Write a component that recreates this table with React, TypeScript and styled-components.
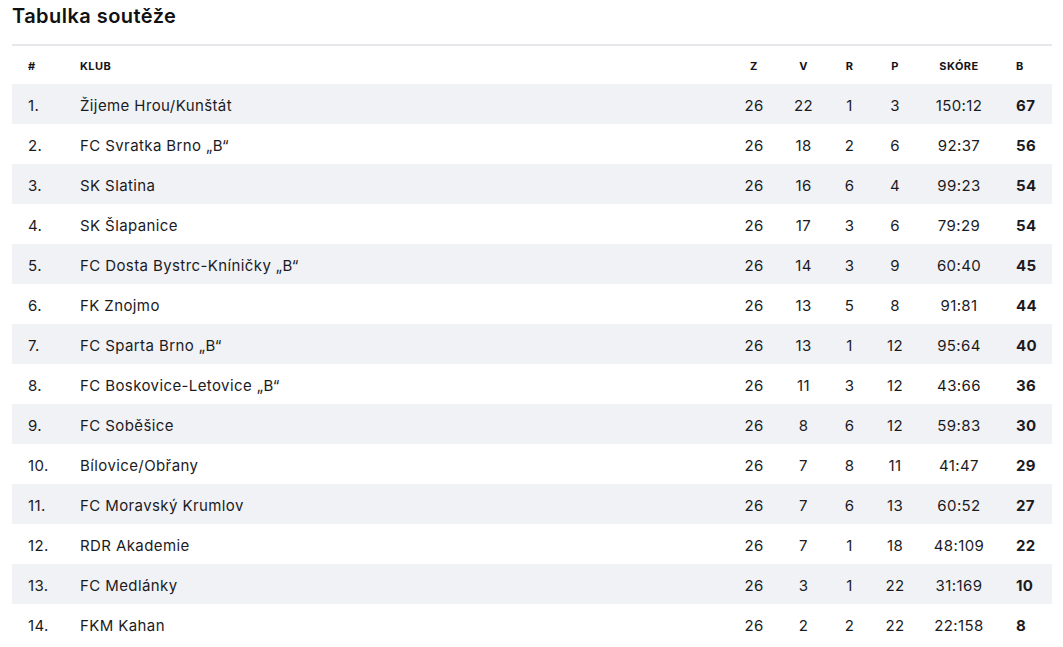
import React from "react"
import styled, { createGlobalStyle } from "styled-components"

const GlobalStyle = createGlobalStyle`
  html, body {
    margin: 0;
    padding: 0;
    background: #fff;
  }
  body {
    font-family: Inter, Roboto, "Liberation Sans", sans-serif;
    color: #1b1b1f;
  }
`

const Page = styled.main`
  padding: 0 11px 0 12px;
`

const Title = styled.h2`
  margin: 0;
  padding-top: 4px;
  height: 40px;
  font-family: Inter, Roboto, sans-serif;
  font-size: 20px;
  font-weight: 600;
  line-height: 25px;
  letter-spacing: 0.45px;
  color: #111114;
`

const Table = styled.table`
  width: 100%;
  border-collapse: collapse;
  table-layout: fixed;
  border-top: 2px solid #e6e7eb;
`

const HeadCell = styled.th<{ $align?: "left" | "center"; $pad?: number }>`
  height: 37px;
  padding: 1px 0 0 ${(p) => p.$pad ?? 0}px;
  text-align: ${(p) => p.$align ?? "center"};
  font-size: 11px;
  font-weight: 700;
  letter-spacing: 0.45px;
  text-transform: uppercase;
  color: #141418;
  vertical-align: middle;
`

const Row = styled.tr<{ $striped: boolean }>`
  background: ${(p) => (p.$striped ? "#f1f2f6" : "#fff")};
`

const Cell = styled.td<{ $align?: "left" | "center"; $pad?: number; $bold?: boolean }>`
  height: 38px;
  padding: 2px 0 0 ${(p) => p.$pad ?? 0}px;
  text-align: ${(p) => p.$align ?? "center"};
  font-size: 15px;
  font-weight: ${(p) => (p.$bold ? 700 : 400)};
  letter-spacing: 0.4px;
  color: #1b1b1f;
  vertical-align: middle;
  white-space: nowrap;
`

type Team = {
  name: string
  z: number
  v: number
  r: number
  p: number
  score: string
  b: number
}

const teams: Team[] = [
  { name: "Žijeme Hrou/Kunštát", z: 26, v: 22, r: 1, p: 3, score: "150:12", b: 67 },
  { name: "FC Svratka Brno „B“", z: 26, v: 18, r: 2, p: 6, score: "92:37", b: 56 },
  { name: "SK Slatina", z: 26, v: 16, r: 6, p: 4, score: "99:23", b: 54 },
  { name: "SK Šlapanice", z: 26, v: 17, r: 3, p: 6, score: "79:29", b: 54 },
  { name: "FC Dosta Bystrc-Kníničky „B“", z: 26, v: 14, r: 3, p: 9, score: "60:40", b: 45 },
  { name: "FK Znojmo", z: 26, v: 13, r: 5, p: 8, score: "91:81", b: 44 },
  { name: "FC Sparta Brno „B“", z: 26, v: 13, r: 1, p: 12, score: "95:64", b: 40 },
  { name: "FC Boskovice-Letovice „B“", z: 26, v: 11, r: 3, p: 12, score: "43:66", b: 36 },
  { name: "FC Soběšice", z: 26, v: 8, r: 6, p: 12, score: "59:83", b: 30 },
  { name: "Bílovice/Obřany", z: 26, v: 7, r: 8, p: 11, score: "41:47", b: 29 },
  { name: "FC Moravský Krumlov", z: 26, v: 7, r: 6, p: 13, score: "60:52", b: 27 },
  { name: "RDR Akademie", z: 26, v: 7, r: 1, p: 18, score: "48:109", b: 22 },
  { name: "FC Medlánky", z: 26, v: 3, r: 1, p: 22, score: "31:169", b: 10 },
  { name: "FKM Kahan", z: 26, v: 2, r: 2, p: 22, score: "22:158", b: 8 },
]

const App = () => {
  return (
    <>
      <GlobalStyle />
      <Page>
        <Title>Tabulka soutěže</Title>
        <Table>
          <colgroup>
            <col style={{ width: 68 }} />
            <col />
            <col style={{ width: 50 }} />
            <col style={{ width: 49 }} />
            <col style={{ width: 43 }} />
            <col style={{ width: 48 }} />
            <col style={{ width: 80 }} />
            <col style={{ width: 53 }} />
          </colgroup>
          <thead>
            <tr>
              <HeadCell $align="left" $pad={16}>#</HeadCell>
              <HeadCell $align="left">Klub</HeadCell>
              <HeadCell>Z</HeadCell>
              <HeadCell>V</HeadCell>
              <HeadCell>R</HeadCell>
              <HeadCell>P</HeadCell>
              <HeadCell>Skóre</HeadCell>
              <HeadCell $align="left" $pad={17}>B</HeadCell>
            </tr>
          </thead>
          <tbody>
            {teams.map((t, i) => (
              <Row key={t.name} $striped={i % 2 === 0}>
                <Cell $align="left" $pad={16}>{i + 1}.</Cell>
                <Cell $align="left">{t.name}</Cell>
                <Cell>{t.z}</Cell>
                <Cell>{t.v}</Cell>
                <Cell>{t.r}</Cell>
                <Cell>{t.p}</Cell>
                <Cell>{t.score}</Cell>
                <Cell $align="left" $pad={17} $bold>{t.b}</Cell>
              </Row>
            ))}
          </tbody>
        </Table>
      </Page>
    </>
  )
}

export default App
